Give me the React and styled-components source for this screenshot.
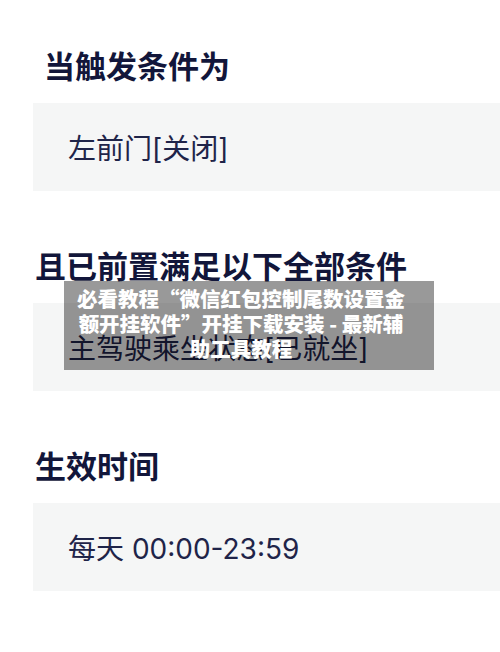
import React from "react";
import styled, { createGlobalStyle } from "styled-components";

const Global = createGlobalStyle`
  html, body { margin: 0; padding: 0; background: #ffffff; }
  body { font-family: "Noto Sans CJK SC", "Noto Sans", sans-serif; }
  #root { width: 500px; height: 652px; position: relative; overflow: hidden; }
`;

const Page = styled.div`
  display: flex;
  flex-direction: column;
  gap: 58px;
  padding-top: 49px;
  background: #ffffff;
  height: 652px;
  box-sizing: border-box;
`;

const Section = styled.section`
  display: flex;
  flex-direction: column;
  gap: 23px;
`;

const Heading = styled.h2`
  margin: 0;
  padding-left: ${(p) => p.$indent}px;
  font-family: "Noto Sans CJK SC", sans-serif;
  font-size: 31px;
  line-height: 31px;
  font-weight: 700;
  color: #12163a;
`;

const Box = styled.div`
  margin-left: 33px;
  height: 88px;
  background: #f5f6f6;
  display: flex;
  align-items: center;
  padding-left: 35px;
  font-family: Inter, "Noto Sans CJK SC", sans-serif;
  font-size: 28px;
  color: #1f2449;
  font-weight: 400;
`;

const Overlay = styled.div`
  position: absolute;
  left: 64px;
  top: 281px;
  width: 370px;
  height: 89px;
  box-sizing: border-box;
  padding: 5px 26px 0 10px;
  background: rgba(0, 0, 0, 0.4);
  color: #ffffff;
  font-family: "Noto Sans CJK SC", sans-serif;
  font-size: 20.5px;
  line-height: 25px;
  font-weight: 900;
  text-align: center;
  white-space: nowrap;
`;

export default function App() {
  return (
    <>
      <Global />
      <Page>
        <Section>
          <Heading $indent={44}>当触发条件为</Heading>
          <Box>左前门[关闭]</Box>
        </Section>
        <Section>
          <Heading $indent={35}>且已前置满足以下全部条件</Heading>
          <Box>主驾驶乘坐状态[已就坐]</Box>
        </Section>
        <Section>
          <Heading $indent={35}>生效时间</Heading>
          <Box>每天 00:00-23:59</Box>
        </Section>
      </Page>
      <Overlay>
        必看教程“微信红包控制尾数设置金
        <br />
        额开挂软件”开挂下载安装 - 最新辅
        <br />
        助工具教程
      </Overlay>
    </>
  );
}
